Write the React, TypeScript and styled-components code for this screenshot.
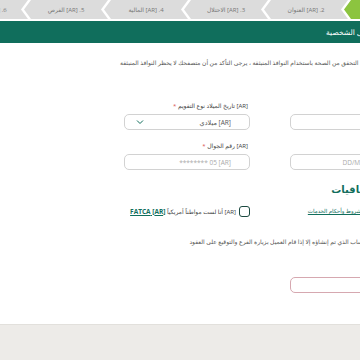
import * as React from "react";
import styled, { createGlobalStyle } from "styled-components";

const colors = {
  green: "#106e5c",
  lime: "#8cc43f",
  stepGray: "#dcdcdc",
  stepText: "#777",
  text: "#555",
  border: "#d2d2d2",
  placeholder: "#aaa",
  footer: "#edebe8",
};

const GlobalStyle = createGlobalStyle`
  html, body {
    margin: 0;
    padding: 0;
    overflow: hidden;
    background: #fff;
  }
  body {
    font-family: "Open Sans", "DejaVu Sans", sans-serif;
  }
`;

const Page = styled.div`
  width: 440px;
  height: 360px;
  display: flex;
  flex-direction: column;
  direction: rtl;
`;

const Stepper = styled.div`
  display: flex;
  height: 19px;
  padding-inline-start: 12px;
  margin-bottom: 2px;
  background: ${colors.stepGray};
  overflow: hidden;
`;

const StepRow = styled.div`
  display: flex;
  background: #fff;
  height: 19px;
`;

const Step = styled.div<{ $active?: boolean }>`
  flex: 0 0 84px;
  display: flex;
  align-items: center;
  justify-content: center;
  font-size: 6px;
  color: ${(p) => (p.$active ? "#fff" : colors.stepText)};
  background: ${(p) => (p.$active ? colors.lime : colors.stepGray)};
  clip-path: polygon(
    0 50%,
    7px 0,
    100% 0,
    calc(100% - 7px) 50%,
    100% 100%,
    7px 100%
  );
  & + & {
    margin-inline-start: -4px;
  }
`;

const TitleBar = styled.div`
  height: 22px;
  line-height: 22px;
  padding-inline: 40px 12px;
  background: ${colors.green};
  color: #fff;
  font-size: 7.5px;
  white-space: nowrap;
`;

const Content = styled.div`
  flex: 1;
  padding-inline: 24px;
`;

const Info = styled.p`
  margin: 15px 0 0;
  font-size: 6px;
  line-height: 10px;
  color: ${colors.text};
  white-space: nowrap;
`;

const Grid = styled.div<{ $top: number }>`
  display: grid;
  grid-template-columns: 126px 126px;
  column-gap: 40px;
  row-gap: 11px;
  margin-top: ${(p) => p.$top}px;
`;

const Field = styled.div`
  display: flex;
  flex-direction: column;
`;

const Label = styled.label`
  font-size: 6px;
  line-height: 10px;
  height: 10px;
  margin-bottom: 3px;
  padding-inline-start: 2px;
  color: #444;
  white-space: nowrap;
`;

const Req = styled.span`
  color: #d9534f;
`;

const Box = styled.div<{ $tone?: "error" }>`
  height: 16px;
  box-sizing: border-box;
  border: 1px solid ${(p) => (p.$tone === "error" ? "#d6a8b0" : colors.border)};
  border-radius: 5px;
  display: flex;
  align-items: center;
  justify-content: space-between;
  padding-inline: 18px 11px;
  font-size: 6.5px;
  color: #555;
`;

const Placeholder = styled.span`
  color: ${colors.placeholder};
  white-space: nowrap;
`;

const Heading = styled.h3`
  margin: 13px 0 0;
  padding-inline-start: 12px;
  font-size: 10px;
  line-height: 12px;
  font-weight: bold;
  color: ${colors.green};
  white-space: nowrap;
`;

const Agreement = styled.div`
  display: flex;
  align-items: center;
  gap: 3px;
  height: 12px;
  font-size: 6px;
  color: #444;
  white-space: nowrap;
`;

const Check = styled.span`
  flex: 0 0 auto;
  width: 11px;
  height: 11px;
  box-sizing: border-box;
  border: 1.5px solid #1c4a41;
  border-radius: 3px;
`;

const Link = styled.a<{ $bold?: boolean }>`
  color: ${colors.green};
  text-decoration: underline;
  font-weight: ${(p) => (p.$bold ? "bold" : "normal")};
  font-size: ${(p) => (p.$bold ? "6.5px" : "5.5px")};
`;

const Note = styled.p`
  margin: 20px 0 0;
  font-size: 6px;
  line-height: 10px;
  color: ${colors.text};
  white-space: nowrap;
`;

const Footer = styled.footer`
  height: 35px;
  border-top: 1px solid #e2e0dc;
  background: ${colors.footer};
`;

const steps = [
  "1. [AR] المعلومات",
  "2. [AR] العنوان",
  "3. [AR] الاحتلال",
  "4. [AR] المالية",
  "5. [AR] الفرص",
  "6. [AR] المراجعة",
];

const ChevronDown = () => (
  <svg width="8" height="6" viewBox="0 0 8 6" fill="none">
    <path d="M1 1.5 L4 4.5 L7 1.5" stroke={colors.green} strokeWidth="1" />
  </svg>
);

export default function App() {
  return (
    <>
      <GlobalStyle />
      <Page>
        <Stepper>
          <StepRow>
            {steps.map((s, i) => (
              <Step key={s} $active={i === 0}>
                {s}
              </Step>
            ))}
          </StepRow>
        </Stepper>
        <TitleBar>[AR] التفاصيل الشخصية</TitleBar>
        <Content>
          <Info>
            [AR] سيتم إجراء عملية التحقق من الصحة باستخدام النوافذ المنبثقة ، يرجى التأكد من أن متصفحك لا يحظر النوافذ المنبثقة
          </Info>
          <Grid $top={33}>
            <Field>
              <Label>
                [AR] تاريخ الميلاد <Req>*</Req>
              </Label>
              <Box />
            </Field>
            <Field>
              <Label>
                [AR] تاريخ الميلاد نوع التقويم <Req>*</Req>
              </Label>
              <Box>
                <span>[AR] ميلادي</span>
                <ChevronDown />
              </Box>
            </Field>
            <Field>
              <Label>
                [AR] تاريخ الميلاد <Req>*</Req>
              </Label>
              <Box>
                <Placeholder>[AR] DD/MM/YYYY</Placeholder>
              </Box>
            </Field>
            <Field>
              <Label>
                [AR] رقم الجوال <Req>*</Req>
              </Label>
              <Box>
                <Placeholder>[AR] 05 ********</Placeholder>
              </Box>
            </Field>
          </Grid>
          <Heading>[AR] الاتفاقيات</Heading>
          <Grid $top={10}>
            <Agreement>
              <Check />
              <span>
                [AR] أوافق على <Link href="#">شروط وأحكام الخدمات</Link>
              </span>
            </Agreement>
            <Agreement>
              <Check />
              <span>
                [AR] أنا لست مواطناً أمريكياً <Link href="#" $bold>[AR] FATCA</Link>
              </span>
            </Agreement>
          </Grid>
          <Note>
            [AR] لن يتم تفعيل الحساب الذي تم إنشاؤه إلا إذا قام العميل بزيارة الفرع والتوقيع على العقود
          </Note>
          <Grid $top={30}>
            <Box $tone="error" />
          </Grid>
        </Content>
        <Footer />
      </Page>
    </>
  );
}
